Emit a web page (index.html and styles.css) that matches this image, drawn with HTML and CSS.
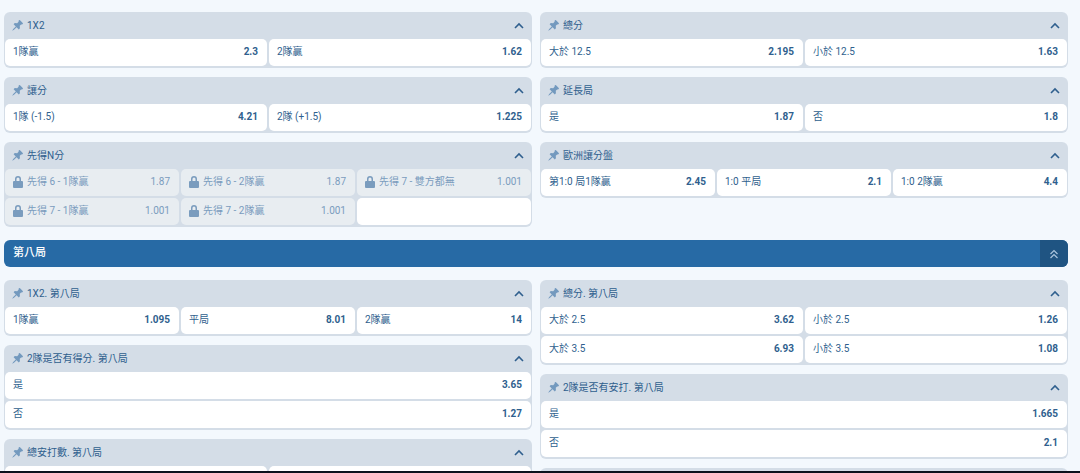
FILE: index.html
```
<!DOCTYPE html>
<html lang="zh-Hant">

<head>
	<meta charset="utf-8">
	<meta name="viewport" content="width=device-width, initial-scale=1">
	<title>第八局</title>
	<link rel="stylesheet" href="styles.css">
</head>

<body>
	<svg class="sprite" aria-hidden="true">
		<symbol id="pin" viewBox="0 0 24 24">
			<path transform="rotate(45 12 12)" d="M16 9V4h1.500V0h-11v4H8v5L4 12.500V16h6.800v8L12 28.500 13.200 24v-8H20v-3.500z" />
		</symbol>
		<symbol id="lock" viewBox="0 0 10 12">
			<path fill-rule="evenodd" d="M1 5h1V3a3 3 0 0 1 6 0v2h1a1 1 0 0 1 1 1v5a1 1 0 0 1-1 1H1a1 1 0 0 1-1-1V6a1 1 0 0 1 1-1zm2.500 0h3V3a1.500 1.500 0 0 0-3 0z" />
		</symbol>
		<symbol id="up" viewBox="0 0 10 10">
			<path d="M1 7L5 3 9 7" fill="none" stroke="currentColor" stroke-width="1.600" />
		</symbol>
		<symbol id="up2" viewBox="0 0 10 10">
			<path d="M1.500 5L5 1.500 8.500 5M1.500 9L5 5.500 8.500 9" fill="none" stroke="currentColor" stroke-width="1.200" />
		</symbol>
	</svg>

	<main class="page">
		<div class="columns">
			<div class="column">
				<section class="market">
					<header class="head">
						<button class="icon pin" aria-label="置頂"><svg><use href="#pin" /></svg></button>
						<h3>1X2</h3>
						<button class="icon toggle" aria-label="收起"><svg><use href="#up" /></svg></button>
					</header>
					<div class="bets two">
						<button class="bet"><span>1隊贏</span><b>2.3</b></button>
						<button class="bet"><span>2隊贏</span><b>1.62</b></button>
					</div>
				</section>
				<section class="market">
					<header class="head">
						<button class="icon pin" aria-label="置頂"><svg><use href="#pin" /></svg></button>
						<h3>讓分</h3>
						<button class="icon toggle" aria-label="收起"><svg><use href="#up" /></svg></button>
					</header>
					<div class="bets two">
						<button class="bet"><span>1隊 (-1.5)</span><b>4.21</b></button>
						<button class="bet"><span>2隊 (+1.5)</span><b>1.225</b></button>
					</div>
				</section>
				<section class="market">
					<header class="head">
						<button class="icon pin" aria-label="置頂"><svg><use href="#pin" /></svg></button>
						<h3>先得N分</h3>
						<button class="icon toggle" aria-label="收起"><svg><use href="#up" /></svg></button>
					</header>
					<div class="bets three">
						<button class="bet locked" disabled><svg><use href="#lock" /></svg><span>先得 6 - 1隊贏</span><b>1.87</b></button>
						<button class="bet locked" disabled><svg><use href="#lock" /></svg><span>先得 6 - 2隊贏</span><b>1.87</b></button>
						<button class="bet locked" disabled><svg><use href="#lock" /></svg><span>先得 7 - 雙方都無</span><b>1.001</b></button>
						<button class="bet locked" disabled><svg><use href="#lock" /></svg><span>先得 7 - 1隊贏</span><b>1.001</b></button>
						<button class="bet locked" disabled><svg><use href="#lock" /></svg><span>先得 7 - 2隊贏</span><b>1.001</b></button>
						<div class="bet"></div>
					</div>
				</section>
			</div>

			<div class="column">
				<section class="market">
					<header class="head">
						<button class="icon pin" aria-label="置頂"><svg><use href="#pin" /></svg></button>
						<h3>總分</h3>
						<button class="icon toggle" aria-label="收起"><svg><use href="#up" /></svg></button>
					</header>
					<div class="bets two">
						<button class="bet"><span>大於 12.5</span><b>2.195</b></button>
						<button class="bet"><span>小於 12.5</span><b>1.63</b></button>
					</div>
				</section>
				<section class="market">
					<header class="head">
						<button class="icon pin" aria-label="置頂"><svg><use href="#pin" /></svg></button>
						<h3>延長局</h3>
						<button class="icon toggle" aria-label="收起"><svg><use href="#up" /></svg></button>
					</header>
					<div class="bets two">
						<button class="bet"><span>是</span><b>1.87</b></button>
						<button class="bet"><span>否</span><b>1.8</b></button>
					</div>
				</section>
				<section class="market">
					<header class="head">
						<button class="icon pin" aria-label="置頂"><svg><use href="#pin" /></svg></button>
						<h3>歐洲讓分盤</h3>
						<button class="icon toggle" aria-label="收起"><svg><use href="#up" /></svg></button>
					</header>
					<div class="bets three">
						<button class="bet"><span>第1:0 局1隊贏</span><b>2.45</b></button>
						<button class="bet"><span>1:0 平局</span><b>2.1</b></button>
						<button class="bet"><span>1:0 2隊贏</span><b>4.4</b></button>
					</div>
				</section>
			</div>
		</div>

		<div class="period">
			<h2>第八局</h2>
			<button class="collapse" aria-label="全部收起"><svg><use href="#up2" /></svg></button>
		</div>

		<div class="columns">
			<div class="column">
				<section class="market">
					<header class="head">
						<button class="icon pin" aria-label="置頂"><svg><use href="#pin" /></svg></button>
						<h3>1X2. 第八局</h3>
						<button class="icon toggle" aria-label="收起"><svg><use href="#up" /></svg></button>
					</header>
					<div class="bets three">
						<button class="bet"><span>1隊贏</span><b>1.095</b></button>
						<button class="bet"><span>平局</span><b>8.01</b></button>
						<button class="bet"><span>2隊贏</span><b>14</b></button>
					</div>
				</section>
				<section class="market">
					<header class="head">
						<button class="icon pin" aria-label="置頂"><svg><use href="#pin" /></svg></button>
						<h3>2隊是否有得分. 第八局</h3>
						<button class="icon toggle" aria-label="收起"><svg><use href="#up" /></svg></button>
					</header>
					<div class="bets">
						<button class="bet"><span>是</span><b>3.65</b></button>
						<button class="bet"><span>否</span><b>1.27</b></button>
					</div>
				</section>
				<section class="market">
					<header class="head">
						<button class="icon pin" aria-label="置頂"><svg><use href="#pin" /></svg></button>
						<h3>總安打數. 第八局</h3>
						<button class="icon toggle" aria-label="收起"><svg><use href="#up" /></svg></button>
					</header>
					<div class="bets two">
						<div class="bet"></div>
						<div class="bet"></div>
					</div>
				</section>
			</div>

			<div class="column">
				<section class="market">
					<header class="head">
						<button class="icon pin" aria-label="置頂"><svg><use href="#pin" /></svg></button>
						<h3>總分. 第八局</h3>
						<button class="icon toggle" aria-label="收起"><svg><use href="#up" /></svg></button>
					</header>
					<div class="bets two">
						<button class="bet"><span>大於 2.5</span><b>3.62</b></button>
						<button class="bet"><span>小於 2.5</span><b>1.26</b></button>
						<button class="bet"><span>大於 3.5</span><b>6.93</b></button>
						<button class="bet"><span>小於 3.5</span><b>1.08</b></button>
					</div>
				</section>
				<section class="market">
					<header class="head">
						<button class="icon pin" aria-label="置頂"><svg><use href="#pin" /></svg></button>
						<h3>2隊是否有安打. 第八局</h3>
						<button class="icon toggle" aria-label="收起"><svg><use href="#up" /></svg></button>
					</header>
					<div class="bets">
						<button class="bet"><span>是</span><b>1.665</b></button>
						<button class="bet"><span>否</span><b>2.1</b></button>
					</div>
				</section>
				<section class="market">
					<header class="head"></header>
				</section>
			</div>
		</div>
	</main>
</body>

</html>
```
FILE: styles.css
```
* {
	box-sizing: border-box;
}

body {
	margin: 0;
	height: 100vh;
	overflow: hidden;
	border-bottom: 2px solid #0b111c;
	background-color: #f3f8fd;
	color: #2f5f8e;
	font-family: Roboto, "Noto Sans CJK TC", sans-serif;
	font-size: 10px;
	line-height: 16px;
}

button {
	margin: 0;
	padding: 0;
	border: none;
	background: none;
	color: inherit;
	font: inherit;
	cursor: pointer;
}

svg {
	display: block;
	flex: none;
	fill: currentColor;
}

.sprite {
	position: absolute;
	width: 0;
	height: 0;
}

.page {
	height: 100%;
	overflow: hidden;
	padding: 12px 12px 0 4px;
}

.columns {
	display: grid;
	grid-template-columns: 1fr 1fr;
	gap: 8px;
	align-items: start;
}

.column {
	display: grid;
	gap: 9px;
}

.market {
	padding: 0 1px 2px;
	border-radius: 6px;
	background-color: #d4dde7;
}

.head {
	display: flex;
	align-items: center;
	gap: 4px;
	height: 27px;
	padding: 0 7px;
}

.head h3 {
	flex: 1;
	margin: 0;
	font-size: 10px;
	font-weight: 400;
}

.icon svg {
	width: 10px;
	height: 10px;
}

.pin {
	color: #7399be;
}

.pin svg {
	width: 11px;
	height: 11px;
}

.bets {
	display: grid;
	gap: 2px;
}

.two {
	grid-template-columns: repeat(2, 1fr);
}

.three {
	grid-template-columns: repeat(3, 1fr);
}

.bet {
	display: flex;
	align-items: center;
	gap: 4px;
	height: 27px;
	padding: 0 9px 1px 8px;
	border-radius: 5px;
	background-color: #fff;
	text-align: left;
}

.bet span {
	flex: 1;
}

.bet b {
	font-weight: 700;
}

.bet svg {
	width: 10px;
	height: 12px;
}

.locked {
	background-color: #e8edf1;
	color: #7a9cbe;
	cursor: default;
}

.locked b {
	font-weight: 400;
}

.period {
	display: flex;
	height: 27px;
	margin: 13px 0;
	border-radius: 6px;
	overflow: hidden;
	background-color: #276aa5;
	color: #fff;
}

.period h2 {
	flex: 1;
	margin: 0;
	padding: 5px 9px;
	font-size: 11px;
	font-weight: 500;
}

.collapse {
	display: grid;
	place-items: center;
	width: 28px;
	background-color: #1f5482;
	color: #a9c4dd;
}

.collapse svg {
	width: 10px;
	height: 10px;
}
```
